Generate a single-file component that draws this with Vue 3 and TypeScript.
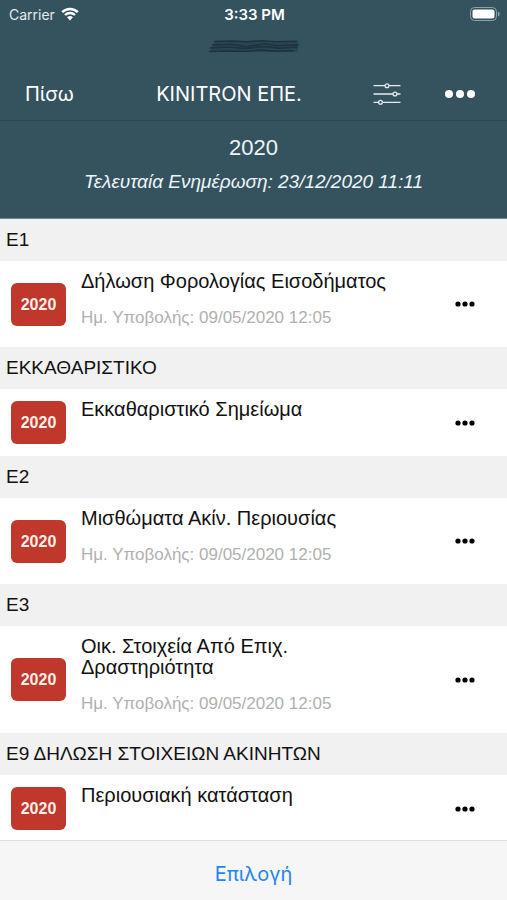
<script setup lang="ts">
interface Doc {
  section: string
  title: string
  year: number
  submitted?: string
}

const docs: Doc[] = [
  { section: 'Ε1', title: 'Δήλωση Φορολογίας Εισοδήματος', year: 2020, submitted: '09/05/2020 12:05' },
  { section: 'ΕΚΚΑΘΑΡΙΣΤΙΚΟ', title: 'Εκκαθαριστικό Σημείωμα', year: 2020 },
  { section: 'Ε2', title: 'Μισθώματα Ακίν. Περιουσίας', year: 2020, submitted: '09/05/2020 12:05' },
  { section: 'Ε3', title: 'Οικ. Στοιχεία Από Επιχ. Δραστηριότητα', year: 2020, submitted: '09/05/2020 12:05' },
  { section: 'Ε9 ΔΗΛΩΣΗ ΣΤΟΙΧΕΙΩΝ ΑΚΙΝΗΤΩΝ', title: 'Περιουσιακή κατάσταση', year: 2020 },
]
</script>

<template>
  <div class="screen">
    <header class="top">
      <div class="status">
        <span class="carrier">
          Carrier
          <svg class="wifi" viewBox="0 0 18 14" aria-hidden="true">
            <path d="M1.2 5.1a11.2 11.2 0 0 1 15.6 0" />
            <path d="M4 8a7.2 7.2 0 0 1 10 0" />
            <path class="solid" d="M6.1 10.3a4.2 4.2 0 0 1 5.8 0L9 13.4z" />
          </svg>
        </span>
        <span class="time">3:33 PM</span>
        <svg class="battery" viewBox="0 0 30 14" aria-hidden="true">
          <rect class="shell" x="0.5" y="0.5" width="26" height="13" rx="4" />
          <rect class="charge" x="2.5" y="2.5" width="22" height="9" rx="2" />
          <path class="cap" d="M28 4.5c2.2 1 2.2 4 0 5z" />
        </svg>
      </div>
      <svg class="scribble" viewBox="0 0 94 16" aria-hidden="true">
        <path class="wash" d="M8 2h83l1 5-2 6H3z" />
        <path d="M7 2.500l18-.6 14 .8 16-1 14 1 21-.5" />
        <path d="M5 6l20-.8 15 2.600 18-3 12 2 21-1" />
        <path d="M3 9l18-1 17 1.400 20-1.800 14 1.600 18-1.200" />
        <path d="M2 12.500l17-.5 22 .2 13-1.200 14 1.200 19-.4" />
      </svg>
      <nav class="bar">
        <button class="back" type="button">Πίσω</button>
        <h1>KINITRON ΕΠΕ.</h1>
        <div class="actions">
          <button class="icon" type="button" aria-label="Φίλτρα">
            <svg class="sliders" viewBox="0 0 28 22" aria-hidden="true">
              <path d="M.5 2.700H12M16 2.700h11.500M.5 11H20M24 11h3.500M.5 19.300H5.500M9.500 19.300h18" />
              <circle cx="14" cy="2.700" r="1.900" />
              <circle cx="22" cy="11" r="1.900" />
              <circle cx="7.500" cy="19.300" r="1.900" />
            </svg>
          </button>
          <button class="icon" type="button" aria-label="Μενού">
            <svg class="menu" viewBox="0 0 30 8" aria-hidden="true">
              <circle cx="4" cy="4" r="4" /><circle cx="15" cy="4" r="4" /><circle cx="26" cy="4" r="4" />
            </svg>
          </button>
        </div>
      </nav>
    </header>

    <div class="summary">
      <h2>2020</h2>
      <p>Τελευταία Ενημέρωση: 23/12/2020 11:11</p>
    </div>

    <main class="list">
      <section v-for="doc in docs" :key="doc.section">
        <h3>{{ doc.section }}</h3>
        <article class="row">
          <span class="year">{{ doc.year }}</span>
          <div class="info">
            <p class="title">{{ doc.title }}</p>
            <p v-if="doc.submitted" class="date">Ημ. Υποβολής: {{ doc.submitted }}</p>
          </div>
          <button class="more" type="button" :aria-label="doc.title">
            <svg viewBox="0 0 20 6" aria-hidden="true">
              <circle cx="3" cy="3" r="2.600" /><circle cx="10" cy="3" r="2.600" /><circle cx="17" cy="3" r="2.600" />
            </svg>
          </button>
        </article>
      </section>
    </main>

    <footer class="toolbar">
      <button type="button">Επιλογή</button>
    </footer>
  </div>
</template>

<style>
body {
  margin: 0;
}
</style>

<style scoped>
.screen {
  display: flex;
  flex-direction: column;
  height: 100vh;
  background: #fff;
  color: #111;
  font-family: "Liberation Sans", Arial, sans-serif;
}
h1, h2, h3, p {
  margin: 0;
  font-weight: 400;
}
button {
  padding: 0;
  border: 0;
  background: none;
  color: inherit;
  font: inherit;
  cursor: pointer;
}
svg {
  display: block;
}
.top {
  flex: none;
  background: #35525f;
  color: #fff;
  font-family: Inter, "Liberation Sans", sans-serif;
  border-bottom: 1px solid #2c4855;
}
.status {
  display: grid;
  grid-template-columns: 1fr auto 1fr;
  align-items: center;
  height: 28px;
  padding: 0 7px 0 9px;
  font-size: 15px;
}
.carrier {
  display: flex;
  align-items: center;
  gap: 6px;
  color: #e3eaee;
  font-size: 14px;
}
.wifi {
  width: 18px;
  height: 14px;
  fill: none;
  stroke: #fff;
  stroke-width: 2.4;
}
.wifi .solid {
  fill: #fff;
  stroke: none;
}
.time {
  font-weight: 600;
}
.battery {
  justify-self: end;
  width: 30px;
  height: 14px;
}
.shell {
  fill: none;
  stroke: #91a1a9;
}
.charge {
  fill: #fff;
}
.cap {
  fill: #91a1a9;
}
.scribble {
  width: 94px;
  height: 16px;
  margin: 11px auto 12px;
  fill: none;
  stroke: #1d333e;
  stroke-width: 1.5;
}
.scribble .wash {
  fill: #2a4552;
  stroke: none;
}
.bar {
  display: grid;
  grid-template-columns: 1fr auto 1fr;
  align-items: center;
  height: 53px;
  padding: 0 32px 0 25px;
}
.back {
  justify-self: start;
  font-size: 20px;
}
.bar h1 {
  margin-right: 42px;
  font-size: 20px;
  line-height: 24px;
}
.actions {
  display: flex;
  justify-content: flex-end;
  align-items: center;
  gap: 44px;
}
.sliders {
  width: 28px;
  height: 22px;
  fill: none;
  stroke: #e6edf0;
  stroke-width: 1.3;
}
.menu {
  width: 30px;
  height: 8px;
  fill: #fff;
}
.summary {
  flex: none;
  box-sizing: border-box;
  height: 98px;
  padding-top: 14px;
  background: #35525f;
  border-bottom: 1px solid #6f8993;
  color: #eef5f8;
  text-align: center;
}
.summary h2 {
  font-size: 22px;
  line-height: 26px;
}
.summary p {
  margin-top: 10px;
  font-size: 19px;
  line-height: 22px;
  font-style: italic;
}
.list {
  flex: 1;
  min-height: 0;
  overflow: hidden;
}
h3 {
  padding: 0 6px;
  background: #f1f1f1;
  font-size: 19px;
  line-height: 42px;
}
.row {
  display: grid;
  grid-template-columns: 55px 1fr 20px;
  align-items: center;
  column-gap: 15px;
  min-height: 67px;
  padding: 0 32px 0 11px;
}
.year {
  border-radius: 6px;
  background: #c0372b;
  color: #fff0e9;
  font-size: 16px;
  font-weight: 700;
  line-height: 43px;
  text-align: center;
}
.info {
  align-self: start;
  max-width: 308px;
  padding-top: 10px;
}
.title {
  font-size: 20px;
  line-height: 21px;
}
.date {
  padding: 16px 0 19px;
  color: #b0b0b0;
  font-size: 17px;
  line-height: 20px;
}
.more svg {
  width: 20px;
  height: 6px;
  fill: #000;
}
.toolbar {
  flex: none;
  display: flex;
  justify-content: center;
  align-items: center;
  box-sizing: border-box;
  height: 60px;
  padding-top: 6px;
  border-top: 1px solid #dcdfe0;
  background: #f6f6f6;
  color: #1f86f5;
  font-family: Inter, "Liberation Sans", sans-serif;
  font-size: 20px;
}
</style>
